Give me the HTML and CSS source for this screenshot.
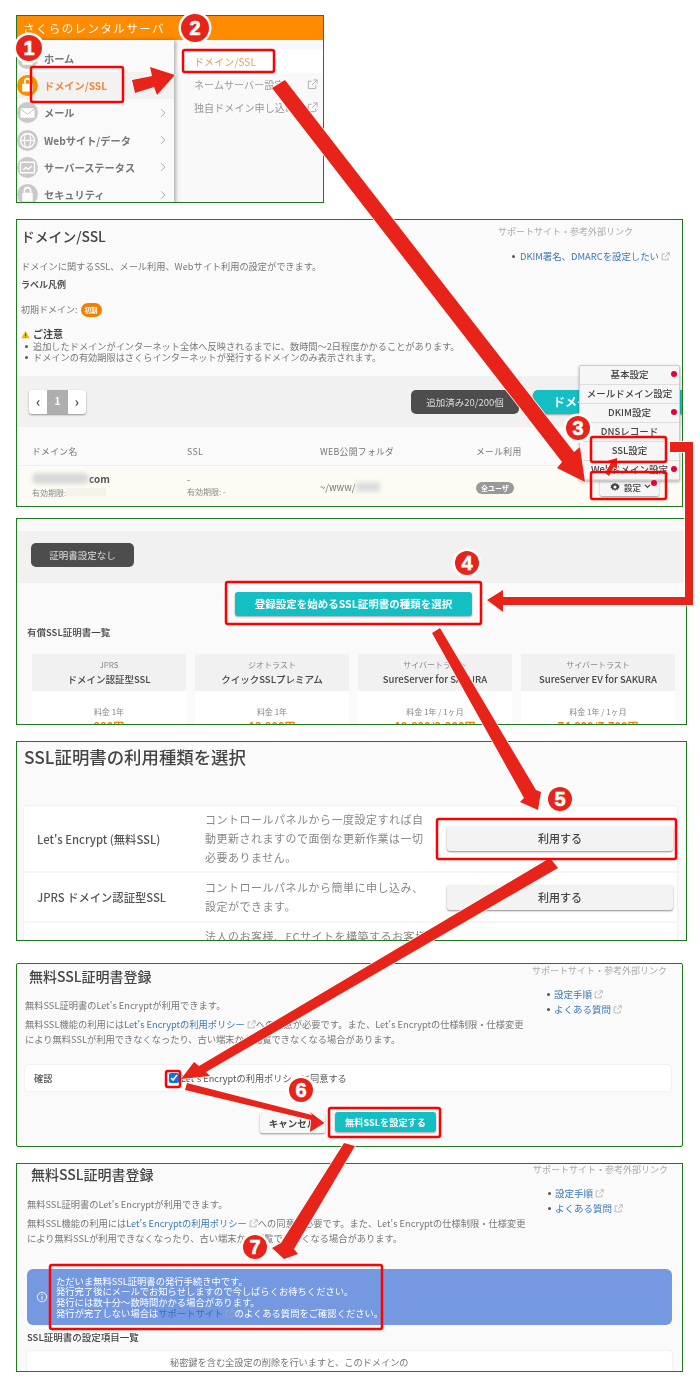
FILE: index.html
```html
<!DOCTYPE html>
<html lang="ja">
<head>
<meta charset="utf-8">
<title>SSL設定手順</title>
<link rel="stylesheet" href="styles.css">
</head>
<body>
<svg class="defs" width="0" height="0" aria-hidden="true">
  <symbol id="ext" viewBox="0 0 12 12"><path d="M9.5 7v3.5h-8v-8H5M7 1h4v4M11 1L5.5 6.5" fill="none" stroke="currentColor" stroke-width="1"/></symbol>
  <symbol id="chev" viewBox="0 0 8 12"><path d="M1.5 1l5 5-5 5" fill="none" stroke="currentColor" stroke-width="1.3"/></symbol>
</svg>
<main class="canvas">

  <section class="panel p1">
    <header class="p1-head">さくらのレンタルサーバ</header>
    <div class="p1-body">
      <nav class="menu">
        <div class="mi"><span class="ic"><svg viewBox="0 0 24 24"><path d="M12 5l8 7h-2v7H6v-7H4z" fill="#fff"/></svg></span><b>ホーム</b></div>
        <div class="mi on"><span class="ic"><svg viewBox="0 0 24 24"><rect x="6" y="10" width="12" height="9" fill="#fff"/><path d="M9 10V7a3 3 0 0 1 6 0v3" fill="none" stroke="#fff" stroke-width="2"/></svg></span><b>ドメイン/SSL</b></div>
        <div class="mi"><span class="ic"><svg viewBox="0 0 24 24"><rect x="4" y="7" width="16" height="11" rx="1" fill="#fff"/><path d="M4 8l8 6 8-6" fill="none" stroke="#bbb"/></svg></span><b>メール</b><svg class="chev"><use href="#chev"/></svg></div>
        <div class="mi"><span class="ic"><svg viewBox="0 0 24 24"><circle cx="12" cy="12" r="8" fill="none" stroke="#fff" stroke-width="1.6"/><ellipse cx="12" cy="12" rx="3.5" ry="8" fill="none" stroke="#fff" stroke-width="1.4"/><path d="M4 12h16" stroke="#fff" stroke-width="1.4"/></svg></span><b>Webサイト/データ</b><svg class="chev"><use href="#chev"/></svg></div>
        <div class="mi"><span class="ic"><svg viewBox="0 0 24 24"><rect x="4" y="6" width="16" height="12" rx="1" fill="none" stroke="#fff" stroke-width="1.6"/><path d="M7 15l3-3 3 2 4-4" fill="none" stroke="#fff" stroke-width="1.6"/></svg></span><b>サーバーステータス</b><svg class="chev"><use href="#chev"/></svg></div>
        <div class="mi"><span class="ic"><svg viewBox="0 0 24 24"><rect x="6" y="10" width="12" height="10" rx="1" fill="#fff"/><path d="M8.500 10V7.500a3.500 3.500 0 0 1 7 0V10" fill="none" stroke="#fff" stroke-width="2"/></svg></span><b>セキュリティ</b><svg class="chev"><use href="#chev"/></svg></div>
      </nav>
      <div class="sub">
        <div class="si on">ドメイン/SSL</div>
        <div class="si">ネームサーバー設定<svg class="ext"><use href="#ext"/></svg></div>
        <div class="si">独自ドメイン申し込み<svg class="ext"><use href="#ext"/></svg></div>
      </div>
    </div>
  </section>

  <section class="panel p2">
    <div class="p2-top">
      <div class="p2-main">
        <h1 class="t16">ドメイン/SSL</h1>
        <p class="desc">ドメインに関するSSL、メール利用、Webサイト利用の設定ができます。</p>
        <p class="legend">ラベル凡例</p>
        <p class="first">初期ドメイン: <span class="tag">初期</span></p>
        <p class="note"><svg class="warn" viewBox="0 0 12 12"><path d="M6 1l5.500 10H.5z" fill="#f5b400"/><path d="M6 4.500v3.500M6 9v1" stroke="#333"/></svg>ご注意</p>
        <ul class="notes">
          <li>追加したドメインがインターネット全体へ反映されるまでに、数時間〜2日程度かかることがあります。</li>
          <li>ドメインの有効期限はさくらインターネットが発行するドメインのみ表示されます。</li>
        </ul>
      </div>
      <aside class="p2-side">
        <div class="sup">サポートサイト・参考外部リンク</div>
        <div class="sup-link"><i class="dot"></i><a>DKIM署名、DMARCを設定したい</a><svg class="ext"><use href="#ext"/></svg></div>
      </aside>
    </div>
    <div class="band">
      <div class="pager"><span>‹</span><span class="cur">1</span><span>›</span></div>
      <div class="band-r">
        <span class="dark">追加済み20/200個</span>
        <span class="teal add">ドメイン追加</span>
      </div>
    </div>
    <div class="thead"><span>ドメイン名</span><span>SSL</span><span>WEB公開フォルダ</span><span>メール利用</span></div>
    <div class="trow">
      <div class="c1"><div class="dom"><i class="smear"></i><b>com</b></div><small>有効期限:<i class="smear2"></i></small></div>
      <div class="c2">-<small>有効期限: -</small></div>
      <div class="c3">~/www/<i class="smear3"></i></div>
      <div class="c4"><span class="pill">全ユーザ</span></div>
      <div class="c5"><span class="gearbtn"><svg viewBox="0 0 24 24" class="gear"><path d="M12 3l2 3 3-1 1 3 3 1-1 3 1 2-3 1-1 3-3-1-2 3-2-3-3 1-1-3-3-1 1-3-1-2 3-1 1-3 3 1z" fill="#444"/><circle cx="12" cy="12" r="3" fill="#fff"/></svg>設定<svg viewBox="0 0 8 6" class="caret"><path d="M1 1l3 3 3-3" fill="none" stroke="#444" stroke-width="1.400"/></svg></span></div>
    </div>
  </section>

  <section class="panel p3">
    <div class="band b3"><span class="dark none">証明書設定なし</span></div>
    <div class="center"><span class="teal big">登録設定を始めるSSL証明書の種類を選択</span></div>
    <p class="h-sm">有償SSL証明書一覧</p>
    <div class="cards">
      <article class="card"><div class="ch"><small>JPRS</small><b>ドメイン認証型SSL</b></div><div class="cb"><small>料金 1年</small><b>990円</b></div></article>
      <article class="card"><div class="ch"><small>ジオトラスト</small><b>クイックSSLプレミアム</b></div><div class="cb"><small>料金 1年</small><b>13,200円</b></div></article>
      <article class="card"><div class="ch"><small>サイバートラスト</small><b>SureServer for SAKURA</b></div><div class="cb"><small>料金 1年 / 1ヶ月</small><b>19,800/2,200円</b></div></article>
      <article class="card"><div class="ch"><small>サイバートラスト</small><b>SureServer EV for SAKURA</b></div><div class="cb"><small>料金 1年 / 1ヶ月</small><b>74,800/7,700円</b></div></article>
    </div>
  </section>

  <section class="panel p4">
    <h2 class="t18">SSL証明書の利用種類を選択</h2>
    <div class="list">
      <div class="lrow r1"><b>Let's Encrypt (無料SSL)</b><p>コントロールパネルから一度設定すれば自動更新されますので面倒な更新作業は一切必要ありません。</p><span class="use">利用する</span></div>
      <div class="lrow r2"><b>JPRS ドメイン認証型SSL</b><p>コントロールパネルから簡単に申し込み、設定ができます。</p><span class="use">利用する</span></div>
      <div class="lrow r3"><b></b><p>法人のお客様、ECサイトを構築するお客様に</p></div>
    </div>
  </section>

  <section class="panel p5">
    <div class="reg-top">
      <div class="reg-main">
        <h2 class="t15">無料SSL証明書登録</h2>
        <p class="txt">無料SSL証明書のLet's Encryptが利用できます。</p>
        <p class="txt lh">無料SSL機能の利用には<a>Let's Encryptの利用ポリシー</a><svg class="ext"><use href="#ext"/></svg>への同意が必要です。また、Let's Encryptの仕様制限・仕様変更により無料SSLが利用できなくなったり、古い端末から閲覧できなくなる場合があります。</p>
      </div>
      <aside class="reg-side">
        <div class="sup">サポートサイト・参考外部リンク</div>
        <div class="sup-link"><i class="dot"></i><a>設定手順</a><svg class="ext"><use href="#ext"/></svg></div>
        <div class="sup-link"><i class="dot"></i><a>よくある質問</a><svg class="ext"><use href="#ext"/></svg></div>
      </aside>
    </div>
    <div class="confirm"><b>確認</b><label><input type="checkbox" checked>Let's Encryptの利用ポリシーに同意する</label></div>
    <div class="actions"><span class="cancel">キャンセル</span><span class="teal go">無料SSLを設定する</span></div>
  </section>

  <section class="panel p6">
    <div class="reg-top">
      <div class="reg-main">
        <h2 class="t15">無料SSL証明書登録</h2>
        <p class="txt">無料SSL証明書のLet's Encryptが利用できます。</p>
        <p class="txt lh">無料SSL機能の利用には<a>Let's Encryptの利用ポリシー</a><svg class="ext"><use href="#ext"/></svg>への同意が必要です。また、Let's Encryptの仕様制限・仕様変更により無料SSLが利用できなくなったり、古い端末から閲覧できなくなる場合があります。</p>
      </div>
      <aside class="reg-side">
        <div class="sup">サポートサイト・参考外部リンク</div>
        <div class="sup-link"><i class="dot"></i><a>設定手順</a><svg class="ext"><use href="#ext"/></svg></div>
        <div class="sup-link"><i class="dot"></i><a>よくある質問</a><svg class="ext"><use href="#ext"/></svg></div>
      </aside>
    </div>
    <div class="alert">
      <svg class="info" viewBox="0 0 14 14"><circle cx="7" cy="7" r="5.500" fill="none" stroke="#fff"/><path d="M7 6v4M7 3.500v1.200" stroke="#fff" stroke-width="1.200"/></svg>
      <p>ただいま無料SSL証明書の発行手続き中です。<br>発行完了後にメールでお知らせしますので今しばらくお待ちください。<br>発行には数十分〜数時間かかる場合があります。<br>発行が完了しない場合は<a>サポートサイト</a><svg class="ext"><use href="#ext"/></svg>のよくある質問をご確認ください。</p>
    </div>
    <p class="h-sm h6">SSL証明書の設定項目一覧</p>
    <div class="tail"><span>秘密鍵を含む全設定の削除を行いますと、このドメインの</span></div>
  </section>

  <div class="menu-pop">
    <div class="pi">基本設定<i class="red"></i></div>
    <div class="pi">メールドメイン設定</div>
    <div class="pi">DKIM設定<i class="red"></i></div>
    <div class="pi">DNSレコード</div>
    <div class="pi">SSL設定</div>
    <div class="pi">Webドメイン設定<i class="red"></i></div>
  </div>
  <i class="red gear-dot"></i>

  <svg class="overlay" viewBox="0 0 700 1400" width="700" height="1400" aria-hidden="true">
    <g class="arrows">
      <polygon points="132,80 152,76 150,67 175,75 157,95 154,87 135,93"/>
      <polygon points="285,80 574,452 580,447 585,482 557,468 562,462 272,88"/>
      <polygon points="605,473 611,463 607,461 617,458 617,469 614,467 609,476"/>
      <polygon points="670,442 693,442 693,605 503,605 503,612 487,600 503,590 503,597 685,597 685,452 670,452"/>
      <polygon points="440,628 536,790 541,792 538,810 520,802 524,798 432,633"/>
      <polygon points="550,858 558,868 206,1072 210,1076 181,1079 194,1062 199,1066"/>
      <polygon points="187,1083 185,1090 311,1120 310,1132 324.500,1123 310,1112 312,1115"/>
      <polygon points="344,1143 355,1146 294,1249 298,1254 284,1259 272,1248 281,1243"/>
    </g>
    <g class="boxes">
      <rect x="31" y="67" width="92" height="35" rx="2"/>
      <rect x="183" y="50" width="91" height="22" rx="2"/>
      <rect x="591" y="437" width="75" height="25" rx="2"/>
      <rect x="591" y="472" width="75" height="27" rx="2"/>
      <rect x="226" y="582" width="255" height="42" rx="2"/>
      <rect x="437" y="819" width="239" height="40" rx="2"/>
      <rect x="166" y="1071" width="14" height="16" rx="2"/>
      <rect x="329" y="1108" width="111" height="29" rx="2"/>
      <rect x="50" y="1265" width="332" height="64" rx="2"/>
    </g>
  </svg>

  <span class="num n1">1</span>
  <span class="num n2">2</span>
  <span class="num n3">3</span>
  <span class="num n4">4</span>
  <span class="num n5">5</span>
  <span class="num n6">6</span>
  <span class="num n7">7</span>
</main>
</body>
</html>
```

FILE: styles.css
```css
* { box-sizing: border-box; }
html, body { margin: 0; padding: 0; background: #fff; }
body { font-family: "Noto Sans CJK JP", "Noto Sans", sans-serif; color: #555; }
p, h1, h2, ul { margin: 0; padding: 0; }
.defs { position: absolute; }
.canvas { position: relative; width: 700px; height: 1400px; overflow: hidden; padding-top: 15px; }
.panel { margin-left: 16px; border: 1px solid #1f7a1f; overflow: hidden; background: #fafafa; filter: blur(.3px); }
.ext { width: 9px; height: 9px; color: #aaa; margin-left: 2px; vertical-align: -1px; flex: none; }
a { color: #3a7ab5; }

/* panel 1 */
.p1 { width: 308px; height: 188px; margin-bottom: 16px; }
.p1-head { height: 24px; background: #ff8c00; color: #fff; font-size: 11.5px; letter-spacing: 1.4px; padding: 3px 0 0 6px; line-height: 18px; }
.p1-body { display: flex; height: 164px; }
.menu { width: 157px; background: #fafafa; padding-top: 5px; box-shadow: 2px 0 4px rgba(0,0,0,.3); z-index: 1; }
.mi { height: 27.2px; display: flex; align-items: center; gap: 6px; padding: 0 8px 0 0; font-size: 10.2px; color: #777; }
.mi b { flex: 1; font-weight: 700; }
.ic { width: 21px; height: 21px; border-radius: 50%; background: #c9c9c9; display: block; flex: none; }
.ic svg { display: block; width: 21px; height: 21px; }
.mi.on { background: #f2f2f2; color: #f08a3c; }
.mi.on .ic { background: #f39200; }
.chev { width: 6px; height: 10px; color: #aaa; }
.sub { flex: 1; padding-top: 10px; background: #f9f9f9; }
.si { position: relative; height: 23px; padding-left: 20px; font-size: 10px; line-height: 23px; color: #999; letter-spacing: .1px; }
.si .ext { position: absolute; right: 5px; top: 6px; width: 11px; height: 11px; }
.si.on { background: #fff; color: #f0995a; }

/* panel 2 */
.p2 { width: 667px; height: 288px; margin-bottom: 11px; }
.p2-top { display: flex; height: 156px; padding: 0 0 0 4px; justify-content: space-between; }
.t16 { font-size: 13.8px; font-weight: 500; color: #444; line-height: 20px; margin-top: 6px; }
.desc { font-size: 9.2px; color: #777; margin-top: 13px; line-height: 14px; }
.legend { font-size: 9px; font-weight: 700; color: #555; margin-top: 5px; line-height: 14px; }
.first { font-size: 9px; color: #777; margin-top: 11px; line-height: 14px; display: flex; align-items: center; gap: 3px; }
.tag { background: #f08000; color: #fff; font-size: 6.5px; font-weight: 700; border-radius: 7px; padding: 0 4px; line-height: 14px; }
.note { font-size: 10px; font-weight: 700; color: #444; margin-top: 10px; line-height: 14px; display: flex; align-items: center; gap: 3px; }
.warn { width: 9px; height: 9px; }
.notes { list-style: none; font-size: 9.2px; color: #777; line-height: 11px; }
.notes li { padding-left: 12px; position: relative; }
.notes li::before { content: ""; position: absolute; left: 4px; top: 4px; width: 3px; height: 3px; border-radius: 50%; background: #555; }
.p2-side { width: 184px; padding-top: 5px; flex: none; }
.sup { font-size: 9px; color: #aaa; line-height: 14px; white-space: nowrap; }
.sup-link { font-size: 9.4px; line-height: 14px; margin-top: 10px; padding-left: 14px; display: flex; align-items: center; }
.dot { width: 3px; height: 3px; border-radius: 50%; background: #555; margin: 0 5px 0 0; flex: none; }
.band { height: 51px; background: #f1f1f1; padding: 14px 12px; display: flex; justify-content: space-between; }
.pager { display: flex; height: 24px; width: 57px; border-radius: 3px; box-shadow: 0 1px 2px rgba(0,0,0,.4); background: #fff; font-size: 14px; font-weight: 700; line-height: 22px; overflow: hidden; }
.pager span { flex: 1; text-align: center; }
.pager .cur { background: #aeaeae; color: #fff; font-size: 10px; flex: 1.1; }
.band-r { display: flex; gap: 14px; margin-right: -33px; }
.dark { display: block; background: #4d4d4d; color: #ddd; border-radius: 5px; font-size: 9.500px; text-align: center; line-height: 24px; height: 24px; }
.band-r .dark { width: 108px; }
.teal { background: #14bfc4; color: #fff; font-weight: 700; text-align: center; border-radius: 3px; display: block; box-shadow: 0 1px 2px rgba(0,0,0,.35); }
.add { width: 170px; height: 24px; border-radius: 5px; font-size: 12px; line-height: 24px; text-align: left; padding-left: 20px; }
.thead { display: grid; grid-template-columns: 155px 133px 156px 1fr; padding-left: 15px; font-size: 8.8px; color: #777; letter-spacing: .3px; height: 38px; line-height: 50px; }
.trow { display: grid; grid-template-columns: 155px 133px 156px 100px 1fr; background: #fdfcf4; border-top: 1px solid #eee; margin-left: 3px; height: 42px; padding-left: 12px; color: #777; font-size: 9.5px; align-items: center; }
.trow small { display: block; font-size: 8px; color: #888; line-height: 12px; }
.dom { display: flex; align-items: center; height: 16px; font-size: 10px; color: #555; }
.c1, .c2 { padding-bottom: 4px; }
.smear { width: 57px; height: 11px; background: #d8d8d8; border-radius: 5px; filter: blur(2px); }
.smear2 { display: inline-block; width: 40px; height: 8px; background: #f5f3ea; }
.smear3 { display: inline-block; width: 24px; height: 10px; background: #ddd; filter: blur(2px); vertical-align: -1px; }
.c2 { line-height: 14px; }
.pill { display: inline-block; background: #999; color: #fff; font-size: 7px; font-weight: 700; border-radius: 7px; padding: 0 5px; line-height: 12px; }
.c5 { margin-left: 24px; }
.gearbtn { display: inline-flex; align-items: center; gap: 3px; background: #f6f6f6; border-radius: 2px; box-shadow: 0 1px 2px rgba(0,0,0,.4); height: 19px; padding: 0 0 0 9px; font-size: 8.5px; color: #444; font-weight: 500; width: 59px; }
.gear { width: 12px; height: 12px; flex: none; }
.caret { width: 7px; height: 5px; flex: none; }

/* panel 3 */
.p3 { width: 671px; height: 207px; margin-bottom: 16px; padding-top: 12px; }
.b3 { height: 52px; padding: 12px 14px; display: block; }
.none { width: 103px; }
.center { display: flex; justify-content: center; padding: 9px 0 0 4px; }
.big { width: 237px; height: 24px; font-size: 10.5px; line-height: 24px; }
.h-sm { font-size: 9.5px; color: #444; line-height: 14px; margin: 9px 0 0 10px; font-weight: 500; }
.cards { display: grid; grid-template-columns: repeat(4, 154px); gap: 9px; margin: 15px 0 0 15px; }
.card { background: #fff; height: 90px; }
.ch { background: #f1f1f1; height: 37px; text-align: center; padding-top: 4px; }
.ch small, .cb small { display: block; font-size: 8px; color: #888; line-height: 13px; }
.ch b { display: block; font-size: 9.5px; font-weight: 500; color: #444; line-height: 14px; margin-top: 1px; }
.cb { text-align: center; padding-top: 14px; }
.cb b { display: block; font-size: 11px; color: #f08000; line-height: 13px; margin-top: 2px; }

/* panel 4 */
.p4 { width: 671px; height: 200px; margin-bottom: 22px; padding: 0 9px 0 7px; }
.t18 { font-size: 17.4px; font-weight: 500; color: #444; line-height: 24px; margin-top: 3px; }
.list { margin-top: 37px; background: #fff; border-radius: 3px; box-shadow: 0 0 2px rgba(0,0,0,.12); }
.lrow { display: grid; grid-template-columns: 168px 233px 1fr; align-items: center; padding: 0 4px 0 13px; border-bottom: 2px solid #f6f6f6; }
.lrow b { font-weight: 500; color: #555; font-size: 11.3px; }
.lrow p { font-size: 11px; letter-spacing: .5px; line-height: 19px; color: #888; width: 222px; }
.r1 { height: 67px; }
.r2 { height: 50px; }
.r3 { height: 40px; align-items: start; padding-top: 4px; }
.use { background: #f3f3f3; border-radius: 3px; box-shadow: 0 1px 2px rgba(0,0,0,.45); height: 25px; line-height: 25px; text-align: center; font-weight: 500; color: #444; margin-left: 9px; font-size: 11px; }

/* panel 5 + 6 */
.p5 { width: 667px; height: 184px; margin-bottom: 16px; padding: 0 11px 0 8px; border-radius: 2px; }
.p6 { width: 667px; height: 209px; padding: 0 10px 0 10px; }
.reg-top { display: flex; justify-content: space-between; height: 88px; }
.t15 { font-size: 14px; font-weight: 500; color: #444; line-height: 20px; margin: 2px 0 12px 4px; }
.p6 .t15 { margin-top: 0; margin-bottom: 12.5px; }
.reg-main { width: 510px; }
.txt { font-size: 9.25px; color: #777; line-height: 15px; }
.txt.lh { width: 500px; margin-top: 4px; }
.reg-side { width: 139px; flex: none; }
.p6 .reg-side { margin-top: -1px; }
.reg-side .sup { margin-bottom: 9.5px; line-height: 13px; }
.reg-side .sup-link { margin-top: 0; padding-left: 15px; line-height: 15px; font-size: 9.5px; }
.reg-side .dot { margin-right: 4px; }
.confirm { display: flex; margin-top: 13px; height: 26px; background: #fff; border-radius: 3px; box-shadow: 0 0 2px rgba(0,0,0,.12); align-items: center; padding-left: 9px; font-size: 9.2px; color: #555; }
.confirm b { width: 135px; font-weight: 500; }
.confirm label { display: flex; align-items: center; gap: 2px; }
.confirm input { width: 10px; height: 10px; margin: 0; accent-color: #0b6fe8; }
.actions { display: flex; justify-content: center; gap: 10px; margin-top: 20px; }
.cancel { width: 65px; height: 20px; margin-top: 2px; background: #f8f8f8; border-radius: 2px; box-shadow: 0 1px 2px rgba(0,0,0,.4); font-size: 9.500px; font-weight: 700; text-align: center; line-height: 20px; color: #444; white-space: nowrap; }
.go { width: 101px; height: 20px; font-size: 9.2px; line-height: 20px; margin-top: 1px; }
.alert { display: flex; align-items: center; gap: 8px; background: #7499e0; border-radius: 6px; height: 56px; margin-top: 17px; padding-left: 9px; color: #fff; }
.alert a { color: #3a6dbf; }
.alert .ext { color: #9ab; }
.info { width: 12px; height: 12px; flex: none; }
.alert p { font-size: 9.300px; line-height: 10.700px; }
.h6 { margin: 5px 0 0 0; }
.tail { margin-top: 7px; height: 40px; background: #fff; box-shadow: 0 0 2px rgba(0,0,0,.12); border-radius: 3px; font-size: 9.2px; color: #777; padding: 4px 0 0 143px; line-height: 14px; }

/* dropdown over panel 2 */
.menu-pop { position: absolute; left: 579px; top: 365px; width: 101px; background: #f3f3f3; border: 1px solid #ccc; border-radius: 2px; box-shadow: 0 1px 3px rgba(0,0,0,.3); filter: blur(.3px); }
.pi { position: relative; height: 19px; text-align: center; font-size: 9.5px; font-weight: 500; color: #444; line-height: 17px; border-bottom: 1px solid #ddd; background: #f6f6f6; }
.red { position: absolute; right: 2px; top: 5px; width: 6px; height: 6px; border-radius: 50%; background: #e4003a; }
.gear-dot { left: 651px; top: 480px; right: auto; }

/* annotation overlay */
.overlay { position: absolute; left: 0; top: 0; pointer-events: none; }
.arrows polygon { fill: #e8231a; stroke: #fff; stroke-width: 1.5; stroke-linejoin: miter; paint-order: stroke; }
.boxes rect { fill: none; stroke: #f00; stroke-width: 2.500; }
.num { position: absolute; width: 24px; height: 24px; border-radius: 50%; background: #e8231a; color: #fff; font-family: "Liberation Sans", Arial, sans-serif; font-weight: 700; font-size: 20px; line-height: 24px; text-align: center; box-shadow: 0 0 0 2.5px #fff; -webkit-text-stroke: .6px #fff; }
.n1 { left: 16px; top: 35px; width: 26px; height: 26px; line-height: 26px; }
.n2 { left: 181px; top: 14px; width: 28px; height: 28px; line-height: 28px; }
.n3 { left: 566px; top: 416px; }
.n4 { left: 455px; top: 551px; }
.n5 { left: 548px; top: 787px; }
.n6 { left: 289px; top: 1078px; }
.n7 { left: 243px; top: 1235px; }
```
